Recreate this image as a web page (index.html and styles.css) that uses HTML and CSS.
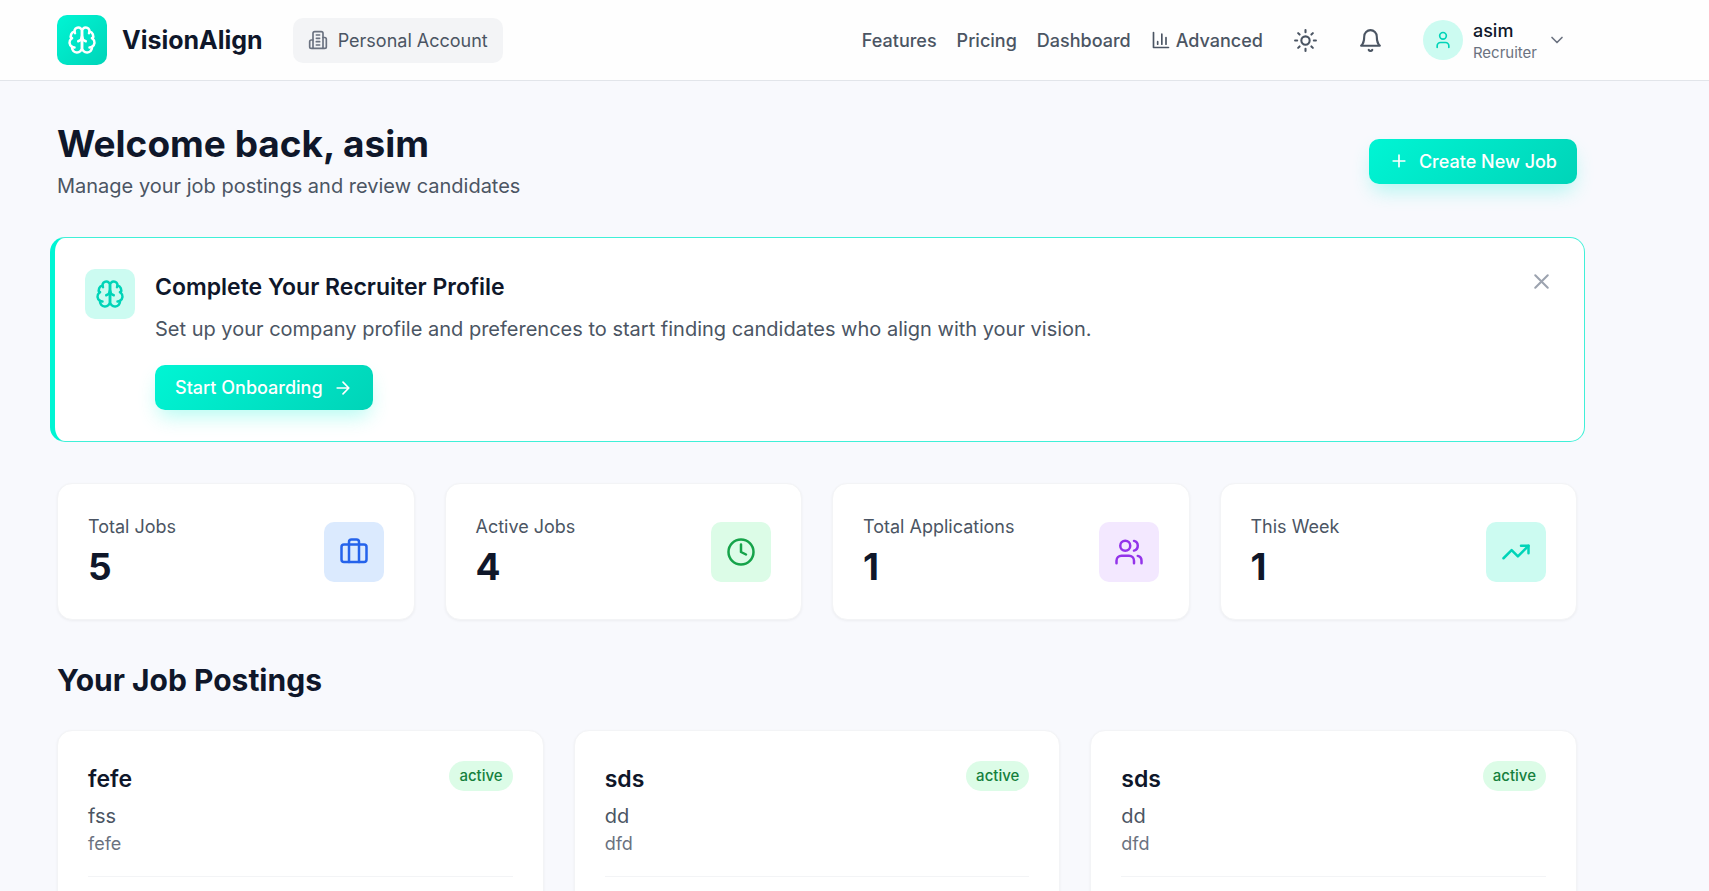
FILE: index.html
```html
<!DOCTYPE html>
<html lang="en">
<head>
  <meta charset="utf-8">
  <meta name="viewport" content="width=device-width, initial-scale=1">
  <title>VisionAlign</title>
  <link rel="stylesheet" href="styles.css">
</head>
<body>
  <!-- shared icons -->
  <svg class="sprite" aria-hidden="true">
    <symbol id="brain" viewBox="0 0 24 24">
      <path d="M12 5a3 3 0 1 0-5.997.125 4 4 0 0 0-2.526 5.77 4 4 0 0 0 .556 6.588A4 4 0 1 0 12 18Z"/>
      <path d="M12 5a3 3 0 1 1 5.997.125 4 4 0 0 1 2.526 5.77 4 4 0 0 1-.556 6.588A4 4 0 1 1 12 18Z"/>
      <path d="M15 13a4.5 4.5 0 0 1-3-4 4.5 4.5 0 0 1-3 4"/>
      <path d="M17.599 6.5a3 3 0 0 0 .399-1.375M6.003 5.125A3 3 0 0 0 6.401 6.5M3.477 10.896a4 4 0 0 1 .585-.396M19.938 10.5a4 4 0 0 1 .585.396M6 18a4 4 0 0 1-1.967-.516M19.967 17.484A4 4 0 0 1 18 18"/>
    </symbol>
  </svg>

  <header class="header">
    <div class="container header-inner">
      <div class="header-left">
        <a class="brand" href="#">
          <span class="logo"><svg class="icon icon-lg"><use href="#brain"/></svg></span>
          VisionAlign
        </a>
        <button type="button" class="account">
          <svg class="icon icon-sm" viewBox="0 0 24 24"><path d="M6 22V4a2 2 0 0 1 2-2h8a2 2 0 0 1 2 2v18Z"/><path d="M6 12H4a2 2 0 0 0-2 2v6a2 2 0 0 0 2 2h2M18 9h2a2 2 0 0 1 2 2v9a2 2 0 0 1-2 2h-2M10 6h4M10 10h4M10 14h4M10 18h4"/></svg>
          Personal Account
        </button>
      </div>
      <nav class="nav">
        <a href="#">Features</a>
        <a href="#">Pricing</a>
        <a href="#">Dashboard</a>
        <a href="#"><svg class="icon icon-sm" viewBox="0 0 24 24"><path d="M3 3v18h18M18 17V9M13 17V5M8 17v-3"/></svg>Advanced</a>
        <button type="button" class="icon-btn" aria-label="Toggle theme">
          <svg class="icon icon-md" viewBox="0 0 24 24"><circle cx="12" cy="12" r="4"/><path d="M12 2v2M12 20v2M4.93 4.93l1.41 1.41M17.66 17.66l1.41 1.41M2 12h2M20 12h2M6.34 17.66l-1.41 1.41M19.07 4.93l-1.41 1.41"/></svg>
        </button>
        <button type="button" class="icon-btn" aria-label="Notifications">
          <svg class="icon icon-md" viewBox="0 0 24 24"><path d="M6 8a6 6 0 0 1 12 0c0 7 3 9 3 9H3s3-2 3-9"/><path d="M10.3 21a1.94 1.94 0 0 0 3.4 0"/></svg>
        </button>
        <button type="button" class="user">
          <span class="avatar"><svg class="icon icon-sm" viewBox="0 0 24 24"><path d="M19 21v-2a4 4 0 0 0-4-4H9a4 4 0 0 0-4 4v2"/><circle cx="12" cy="7" r="4"/></svg></span>
          <span class="user-text">
            <span class="user-name">asim</span>
            <span class="user-role">Recruiter</span>
          </span>
          <svg class="icon icon-sm chevron" viewBox="0 0 24 24"><path d="m6 9 6 6 6-6"/></svg>
        </button>
      </nav>
    </div>
  </header>

  <main class="container main">
    <div class="page-head">
      <div>
        <h1>Welcome back, asim</h1>
        <p class="lead">Manage your job postings and review candidates</p>
      </div>
      <button type="button" class="btn">
        <svg class="icon icon-sm" viewBox="0 0 24 24"><path d="M5 12h14M12 5v14"/></svg>
        Create New Job
      </button>
    </div>

    <section class="banner">
      <span class="banner-icon"><svg class="icon icon-lg"><use href="#brain"/></svg></span>
      <div class="banner-body">
        <h3>Complete Your Recruiter Profile</h3>
        <p>Set up your company profile and preferences to start finding candidates who align with your vision.</p>
        <button type="button" class="btn">
          Start Onboarding
          <svg class="icon icon-sm" viewBox="0 0 24 24"><path d="M5 12h14M12 5l7 7-7 7"/></svg>
        </button>
      </div>
      <button type="button" class="close" aria-label="Dismiss">
        <svg class="icon icon-md" viewBox="0 0 24 24"><path d="M18 6 6 18M6 6l12 12"/></svg>
      </button>
    </section>

    <section class="stats">
      <div class="card stat">
        <div>
          <p class="stat-label">Total Jobs</p>
          <p class="stat-value">5</p>
        </div>
        <span class="stat-icon blue"><svg class="icon icon-lg" viewBox="0 0 24 24"><path d="M16 20V4a2 2 0 0 0-2-2h-4a2 2 0 0 0-2 2v16"/><rect x="2" y="6" width="20" height="14" rx="2"/></svg></span>
      </div>
      <div class="card stat">
        <div>
          <p class="stat-label">Active Jobs</p>
          <p class="stat-value">4</p>
        </div>
        <span class="stat-icon green"><svg class="icon icon-lg" viewBox="0 0 24 24"><circle cx="12" cy="12" r="10"/><path d="M12 6v6l4 2"/></svg></span>
      </div>
      <div class="card stat">
        <div>
          <p class="stat-label">Total Applications</p>
          <p class="stat-value">1</p>
        </div>
        <span class="stat-icon purple"><svg class="icon icon-lg" viewBox="0 0 24 24"><path d="M16 21v-2a4 4 0 0 0-4-4H6a4 4 0 0 0-4 4v2"/><circle cx="9" cy="7" r="4"/><path d="M22 21v-2a4 4 0 0 0-3-3.87M16 3.13a4 4 0 0 1 0 7.75"/></svg></span>
      </div>
      <div class="card stat">
        <div>
          <p class="stat-label">This Week</p>
          <p class="stat-value">1</p>
        </div>
        <span class="stat-icon teal"><svg class="icon icon-lg" viewBox="0 0 24 24"><path d="m22 7-8.500 8.500-5-5L2 17"/><path d="M16 7h6v6"/></svg></span>
      </div>
    </section>

    <h2>Your Job Postings</h2>
    <section class="jobs">
      <article class="card job">
        <div class="job-top">
          <h3>fefe</h3>
          <span class="badge">active</span>
        </div>
        <p class="job-company">fss</p>
        <p class="job-place">fefe</p>
        <div class="job-foot"></div>
      </article>
      <article class="card job">
        <div class="job-top">
          <h3>sds</h3>
          <span class="badge">active</span>
        </div>
        <p class="job-company">dd</p>
        <p class="job-place">dfd</p>
        <div class="job-foot"></div>
      </article>
      <article class="card job">
        <div class="job-top">
          <h3>sds</h3>
          <span class="badge">active</span>
        </div>
        <p class="job-company">dd</p>
        <p class="job-place">dfd</p>
        <div class="job-foot"></div>
      </article>
    </section>
  </main>
</body>
</html>
```

FILE: styles.css
```css
* {
  box-sizing: border-box;
}

body {
  margin: 0;
  font-family: Inter, "Liberation Sans", sans-serif;
  font-size: 20px;
  line-height: 30px;
  color: #0f172a;
  background: #f8f9fd;
}

h1, h2, h3, p {
  margin: 0;
}

a {
  color: inherit;
  text-decoration: none;
}

button {
  font: inherit;
  color: inherit;
  border: none;
  background: none;
  padding: 0;
  cursor: pointer;
}

.sprite {
  display: block;
  width: 0;
  height: 0;
}

.icon {
  flex-shrink: 0;
  fill: none;
  stroke: currentColor;
  stroke-width: 2;
  stroke-linecap: round;
  stroke-linejoin: round;
}
.icon-sm {
  width: 20px;
  height: 20px;
}
.icon-md {
  width: 25px;
  height: 25px;
}
.icon-lg {
  width: 30px;
  height: 30px;
}

/* header and page share one column */
.container {
  max-width: 1634px;
  padding: 0 57px;
}

/* header */
.header {
  background: #fefefe;
  border-bottom: 1px solid #e2e5ea;
}
.header-inner {
  display: flex;
  justify-content: space-between;
  align-items: center;
  height: 80px;
}
.header-left {
  display: flex;
  align-items: center;
  gap: 30px;
}
.brand {
  display: flex;
  align-items: center;
  gap: 15px;
  font-size: 25px;
  font-weight: 700;
}
.logo {
  display: flex;
  padding: 10px;
  border-radius: 10px;
  color: #fff;
  background: linear-gradient(135deg, #00f5d4, #00d4b8);
}
.account {
  display: flex;
  align-items: center;
  gap: 10px;
  padding: 10px 15px;
  border-radius: 10px;
  font-size: 18px;
  line-height: 25px;
  color: #4b5563;
  background: #f3f4f6;
}
.account .icon {
  color: #6b7280;
}
.nav {
  display: flex;
  align-items: center;
  gap: 20px;
  font-size: 18px;
  line-height: 25px;
  font-weight: 500;
  color: #4b5563;
}
.nav a {
  display: flex;
  align-items: center;
  gap: 5px;
}
.icon-btn {
  display: flex;
  padding: 10px;
}
.user {
  display: flex;
  align-items: center;
  gap: 10px;
  padding: 0 10px;
}
.avatar {
  display: flex;
  padding: 10px;
  border-radius: 50%;
  color: #00d4b8;
  background: #ccfbf1;
}
.user-text {
  display: flex;
  flex-direction: column;
  text-align: left;
}
.user-name {
  line-height: 25px;
  color: #0f172a;
}
.user-role {
  font-size: 15px;
  line-height: 20px;
  font-weight: 400;
  color: #6b7280;
}
.chevron {
  color: #6b7280;
}

/* page heading */
.main {
  padding-top: 40px;
}
.page-head {
  display: flex;
  justify-content: space-between;
  align-items: center;
  margin-bottom: 36px;
}
h1 {
  font-size: 37px;
  line-height: 45px;
}
.lead {
  margin-top: 5px;
  color: #4b5563;
}
.btn {
  display: flex;
  align-items: center;
  gap: 10px;
  padding: 10px 20px;
  border-radius: 10px;
  font-size: 18px;
  line-height: 25px;
  font-weight: 500;
  color: #fff;
  background: linear-gradient(135deg, #00f5d4, #00d4b8);
  box-shadow: 0 10px 20px -4px rgba(0, 245, 212, 0.3);
}

/* onboarding banner, a little wider than the column */
.banner {
  display: flex;
  align-items: flex-start;
  gap: 20px;
  margin: 0 -8px 41px -7px;
  padding: 31px 30px;
  border: 1px solid #40f0d8;
  border-left: 5px solid #00f5d4;
  border-radius: 15px;
  background: #fff;
}
.banner-icon {
  display: flex;
  padding: 10px;
  border-radius: 10px;
  color: #00d4b8;
  background: #ccfbf1;
}
.banner-body {
  flex: 1;
}
.banner h3 {
  font-size: 23px;
  line-height: 36px;
  font-weight: 600;
}
.banner p {
  margin: 9px 0 21px;
  color: #4b5563;
}
.close {
  display: flex;
  color: #9ca3af;
}

/* cards */
.card {
  padding: 30px;
  border: 1px solid #f3f4f6;
  border-radius: 15px;
  background: #fff;
  box-shadow: 0 1px 3px rgba(0, 0, 0, 0.05);
}
.stats {
  display: grid;
  grid-template-columns: repeat(4, 1fr);
  gap: 30px;
  margin-bottom: 40px;
}
.stat {
  display: flex;
  justify-content: space-between;
  align-items: center;
}
.stat-label {
  font-size: 18px;
  line-height: 25px;
  color: #4b5563;
}
.stat-value {
  margin-top: 5px;
  font-size: 37px;
  line-height: 45px;
  font-weight: 700;
}
.stat-icon {
  display: flex;
  padding: 15px;
  border-radius: 10px;
}
.blue {
  color: #2563eb;
  background: #dbeafe;
}
.green {
  color: #16a34a;
  background: #dcfce7;
}
.purple {
  color: #9333ea;
  background: #f3e8ff;
}
.teal {
  color: #00d4b8;
  background: #ccfbf1;
}

/* job postings */
h2 {
  margin-bottom: 30px;
  font-size: 30px;
  line-height: 40px;
}
.jobs {
  display: grid;
  grid-template-columns: repeat(3, 1fr);
  gap: 30px;
}
.job-top {
  display: flex;
  justify-content: space-between;
  align-items: flex-start;
}
.job h3 {
  font-size: 23px;
  line-height: 36px;
  font-weight: 600;
}
.badge {
  padding: 5px 10px;
  border-radius: 15px;
  font-size: 15px;
  line-height: 20px;
  font-weight: 500;
  color: #15803d;
  background: #dcfce7;
}
.job-company {
  margin-top: 4px;
  color: #4b5563;
}
.job-place {
  font-size: 18px;
  line-height: 25px;
  color: #6b7280;
}
.job-foot {
  margin-top: 20px;
  min-height: 60px;
  border-top: 1px solid #f3f4f6;
}
```
